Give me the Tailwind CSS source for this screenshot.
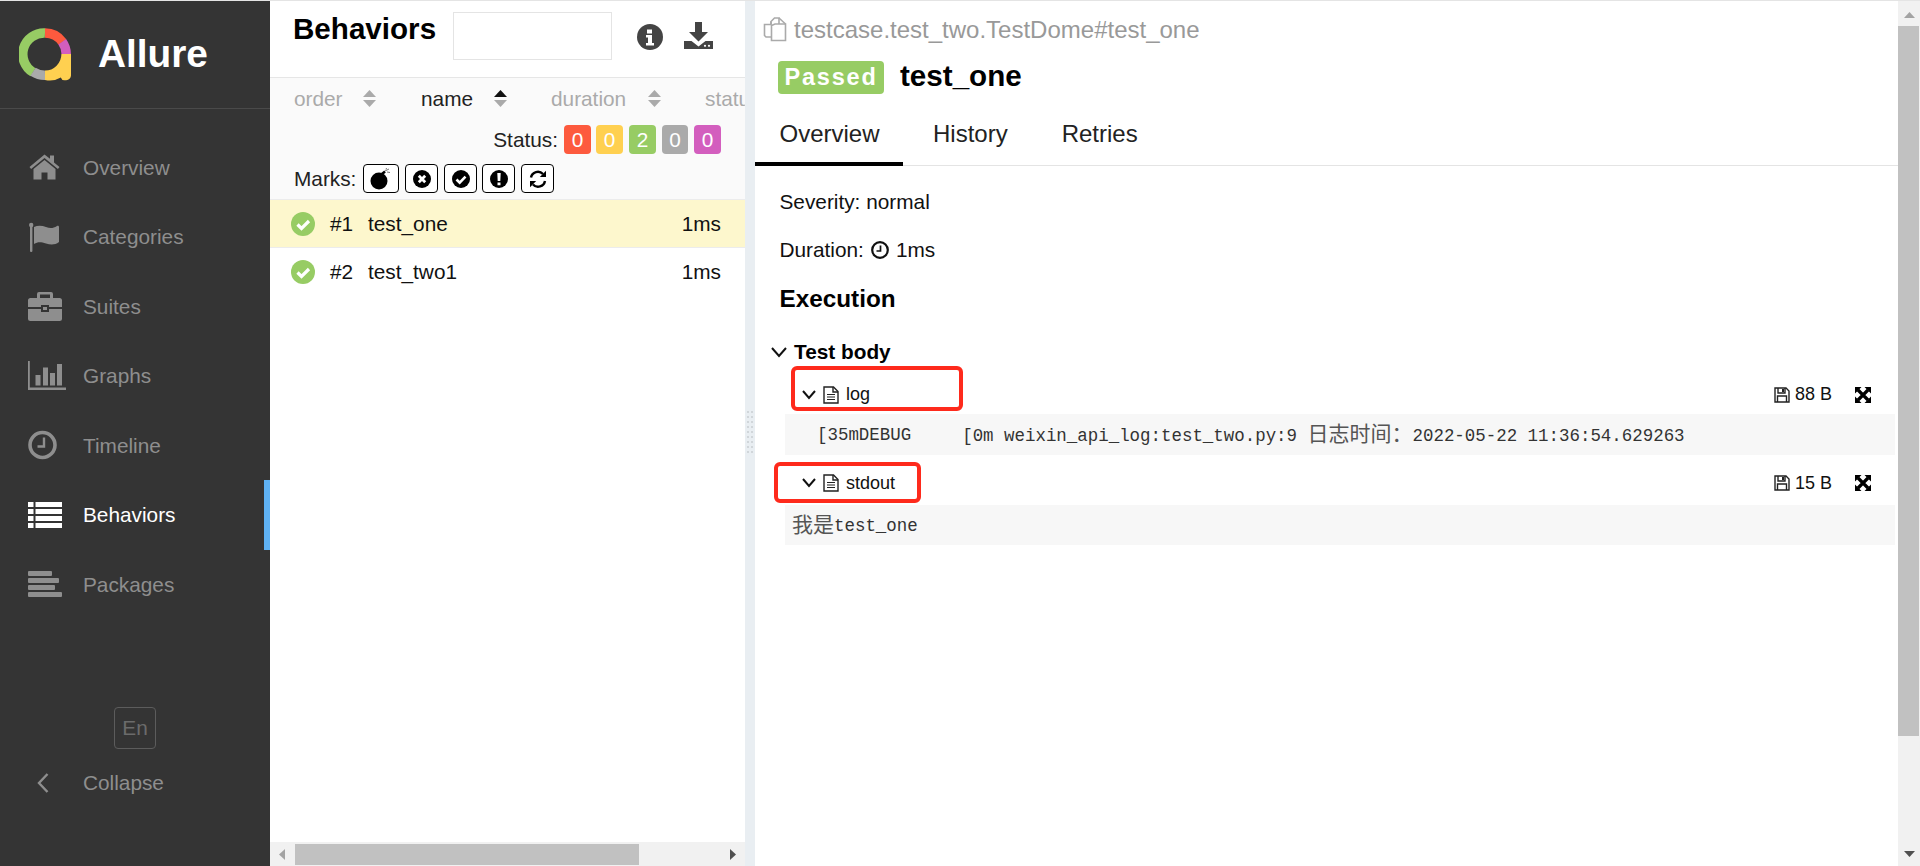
<!DOCTYPE html>
<html>
<head>
<meta charset="utf-8">
<script src="https://cdn.jsdelivr.net/npm/@tailwindcss/browser@4"></script>
</head>
<body class="overflow-hidden">
<div class="relative w-[1920px] h-[866px] flex flex-col overflow-hidden bg-white text-[20.8px] text-[#111] [font-family:'Liberation_Sans','Noto_Sans_CJK_SC',sans-serif]">
  <div class="h-px bg-[#e4e4e4] shrink-0"></div>
  <div class="flex flex-1 min-h-0">
    <!-- Sidebar -->
    <aside class="w-[270px] shrink-0 bg-[#343434] flex flex-col text-[#8e8e8e]">
      <div class="h-[108px] shrink-0 border-b border-[#4a4a4a] flex items-center pl-[19px]">
        <svg class="w-[53px] h-[53px] shrink-0" viewBox="0 0 53 53">
          <g fill="none" stroke-width="9.5">
            <path d="M14 44.300A21.200 21.200 0 0 1 26 5" stroke="#97cc64" />
            <path d="M26 47.200A21.200 21.200 0 0 1 14 43.700" stroke="#aaaaaa"/>
            <path d="M26 5A21.200 21.200 0 0 1 43.400 14" stroke="#fd5a3e"/>
            <path d="M43.200 13.800A21.200 21.200 0 0 1 47.200 26" stroke="#d35ebe"/>
          </g>
          <path d="M26 42.500A16.500 16.500 0 0 0 42.400 26H52V47.500A4.800 4.800 0 0 1 47.200 52.200H45.500A3.800 3.800 0 0 1 41.800 49.500A21.500 21.500 0 0 1 26 52Z" fill="#ffd050"/>
        </svg>
        <span class="ml-[26px] text-[38.8px] font-bold text-white leading-none">Allure</span>
      </div>
      <nav class="pt-[23.500px] flex flex-col">
        <a class="h-[69.5px] flex items-center pl-[28px] gap-[21px]">
          <span class="w-[34px] h-[30px] flex items-center"><svg class="ml-px" width="32" height="26" viewBox="0 0 32 26" fill="#8e8e8e"><path d="M15.500 0.500 0.500 13l1.600 2L15.500 4l13.400 11 1.600-2-5.500-4.600V1.500h-4v3.300Z"/><path d="M15.500 6 4.500 15v10.500h8v-7h6v7h8V15Z"/></svg></span>
          <span>Overview</span>
        </a>
        <a class="h-[69.5px] flex items-center pl-[28px] gap-[21px]">
          <span class="w-[34px] h-[30px] flex items-center"><svg width="34" height="30" viewBox="0 0 34 30" fill="#8e8e8e"><rect x="2" y="3" width="2.400" height="27" rx="1"/><circle cx="3.200" cy="3" r="2.200"/><path d="M6 5c4-2 8-1.500 12 0s7 1.500 11-1c1-.5 2 0 2 1v15c-4 3-8 3-13 1.500S10 19.500 6 22Z"/></svg></span>
          <span>Categories</span>
        </a>
        <a class="h-[69.5px] flex items-center pl-[28px] gap-[21px]">
          <span class="w-[34px] h-[30px] flex items-center"><svg width="34" height="29" viewBox="0 0 34 29" fill="#8e8e8e"><path d="M11 0h12a2 2 0 0 1 2 2v4h6.500A2.500 2.500 0 0 1 34 8.500V15H21v-2h-8v2H0V8.500A2.500 2.500 0 0 1 2.500 6H9V2a2 2 0 0 1 2-2Zm1 2.500V6h10V2.500Z"/><path d="M0 17h13v3h8v-3h13v9.500a2.500 2.500 0 0 1-2.500 2.500h-29A2.500 2.500 0 0 1 0 26.500Z"/><rect x="15" y="15" width="4" height="3"/></svg></span>
          <span>Suites</span>
        </a>
        <a class="h-[69.5px] flex items-center pl-[28px] gap-[21px]">
          <span class="w-[34px] h-[30px] flex items-center overflow-visible"><svg class="overflow-visible" width="38" height="29" viewBox="0 0 38 29" fill="#8e8e8e"><path d="M0 0h1.800v26.500H38V29H0Z"/><rect x="7.500" y="14" width="5" height="10.500"/><rect x="15" y="6.500" width="5" height="18"/><rect x="22" y="12" width="5" height="12.500"/><rect x="29" y="3" width="5" height="21.500"/></svg></span>
          <span>Graphs</span>
        </a>
        <a class="h-[69.5px] flex items-center pl-[28px] gap-[21px]">
          <span class="w-[34px] h-[30px] flex items-center"><svg width="30" height="30" viewBox="0 0 30 30" fill="none" stroke="#8e8e8e"><circle cx="14.500" cy="15" r="12.500" stroke-width="3.600"/><path d="M16 7.500V16.500H9.500" stroke-width="2.400"/></svg></span>
          <span>Timeline</span>
        </a>
        <a class="relative h-[69.5px] flex items-center pl-[28px] gap-[21px] text-white">
          <span class="w-[34px] h-[30px] flex items-center"><svg width="34" height="26" viewBox="0 0 34 26" fill="#fff"><rect y="0" width="5.500" height="5"/><rect x="7.500" y="0" width="26.500" height="5"/><rect y="7" width="5.500" height="5"/><rect x="7.500" y="7" width="26.500" height="5"/><rect y="14" width="5.500" height="5"/><rect x="7.500" y="14" width="26.500" height="5"/><rect y="21" width="5.500" height="5"/><rect x="7.500" y="21" width="26.500" height="5"/></svg></span>
          <span>Behaviors</span>
          <span class="absolute right-0 top-0 w-[6px] h-[70px] bg-[#5fb2f4]"></span>
        </a>
        <a class="h-[69.5px] flex items-center pl-[28px] gap-[21px]">
          <span class="w-[34px] h-[30px] flex items-center"><svg width="34" height="26" viewBox="0 0 34 26" fill="#8e8e8e"><rect y="0" width="24" height="5" rx="1"/><rect y="7" width="31" height="5" rx="1"/><rect y="14" width="27" height="5" rx="1"/><rect y="21" width="34" height="5" rx="1"/></svg></span>
          <span>Packages</span>
        </a>
      </nav>
      <div class="flex-1"></div>
      <div class="flex justify-center">
        <span class="w-[42px] h-[42px] border border-[#5c5c5c] rounded-[4px] flex items-center justify-center text-[#6b6b6b]">En</span>
      </div>
      <div class="h-[68px] mb-[49px] flex items-center pl-[37px]">
        <svg width="12" height="20" viewBox="0 0 12 20" fill="none" stroke="#8e8e8e" stroke-width="2.400"><path d="M10.500 1 2 10l8.500 9"/></svg>
        <span class="ml-[34px]">Collapse</span>
      </div>
    </aside>

    <!-- List pane -->
    <section class="w-[475px] shrink-0 flex flex-col">
      <div class="h-[77px] shrink-0 border-b border-[#e6e6e6] flex items-start">
        <h2 class="ml-[23px] mt-[9px] text-[29.6px] leading-[38px] font-bold text-black">Behaviors</h2>
        <div class="ml-[17px] mt-[11px] w-[159px] h-[48px] border border-[#e4e4e4]"></div>
        <svg class="ml-[25px] mt-[23px]" width="26" height="26" viewBox="0 0 26 26"><circle cx="13" cy="13" r="13" fill="#444"/><path d="M10 5.500h5v4h-5ZM9 11h6v8h2v2.500H9V19h2v-5.500H9Z" fill="#fff"/></svg>
        <svg class="ml-[21px] mt-[21px]" width="29" height="27" viewBox="0 0 29 27" fill="#444"><path d="M11 0h7v10h6L14.500 19.500 5 10h6Z"/><path d="M0 19h7.500l7 5.500 7-5.500H29v8H0Z"/><circle cx="21" cy="23.800" r="1.100" fill="#fff"/><circle cx="25" cy="23.800" r="1.100" fill="#fff"/></svg>
      </div>
      <div class="h-[122px] shrink-0 bg-[#fafafa] border-b border-[#ececec] overflow-hidden">
        <div class="h-[41px] flex items-center whitespace-nowrap text-[#aaa]">
          <span class="shrink-0 ml-[24px] w-[69px]">order</span>
          <svg class="shrink-0" width="13" height="17" viewBox="0 0 13 17" fill="#aaa"><path d="M6.500 0 13 7H0Z"/><path d="M0 10h13L6.500 17Z"/></svg>
          <span class="shrink-0 ml-[45px] w-[73px] text-[#222]">name</span>
          <svg class="shrink-0" width="13" height="17" viewBox="0 0 13 17" fill="#aaa"><path d="M6.500 0 13 7H0Z" fill="#111"/><path d="M0 10h13L6.500 17Z"/></svg>
          <span class="shrink-0 ml-[44px] w-[97px]">duration</span>
          <svg class="shrink-0" width="13" height="17" viewBox="0 0 13 17" fill="#aaa"><path d="M6.500 0 13 7H0Z"/><path d="M0 10h13L6.500 17Z"/></svg>
          <span class="shrink-0 ml-[44px]">status</span>
        </div>
        <div class="h-[41px] flex items-center justify-end pr-[24px] gap-[6px] text-[#222]">
          <span>Status:</span>
          <span class="-mr-px w-[27px] h-[29px] rounded-[4px] bg-[#fd5a3e] text-white flex items-center justify-center">0</span>
          <span class="w-[27px] h-[29px] rounded-[4px] bg-[#ffd050] text-white flex items-center justify-center">0</span>
          <span class="w-[27px] h-[29px] rounded-[4px] bg-[#97cc64] text-white flex items-center justify-center">2</span>
          <span class="w-[26px] h-[29px] rounded-[4px] bg-[#aaaaaa] text-white flex items-center justify-center">0</span>
          <span class="w-[27px] h-[29px] rounded-[4px] bg-[#d35ebe] text-white flex items-center justify-center">0</span>
        </div>
        <div class="h-[37px] flex items-center pl-[24px] text-[#222]">
          <span>Marks:</span>
          <span class="ml-[7px] w-[36px] h-[29px] border border-black rounded-[4px] bg-white flex items-center justify-center"><svg width="22" height="22" viewBox="0 0 22 22"><circle cx="9" cy="13" r="8.500"/><path d="M12 6l3-2.500" stroke="#000" stroke-width="2.500"/><path d="M15 3 19 1M17 4l3 .5M16 1.500l.5-1.500" stroke="#777" stroke-width="1" fill="none"/></svg></span>
          <span class="ml-[6px] w-[33px] h-[29px] border border-black rounded-[4px] bg-white flex items-center justify-center"><svg width="18" height="18" viewBox="0 0 18 18"><circle cx="9" cy="9" r="9"/><path d="M5.800 5.800l6.400 6.400m0-6.400-6.400 6.400" stroke="#fff" stroke-width="2.800"/></svg></span>
          <span class="ml-[6px] w-[33px] h-[29px] border border-black rounded-[4px] bg-white flex items-center justify-center"><svg width="18" height="18" viewBox="0 0 18 18"><circle cx="9" cy="9" r="9"/><path d="M4.500 9.500l3.200 3.200 5.800-6" stroke="#fff" stroke-width="2.600" fill="none"/></svg></span>
          <span class="ml-[5px] w-[33px] h-[29px] border border-black rounded-[4px] bg-white flex items-center justify-center"><svg width="18" height="18" viewBox="0 0 18 18"><circle cx="9" cy="9" r="9"/><path d="M7.300 3h3.400l-.4 8H7.700ZM7.500 12.500h3v2.800h-3Z" fill="#fff"/></svg></span>
          <span class="ml-[6px] w-[33px] h-[29px] border border-black rounded-[4px] bg-white flex items-center justify-center"><svg width="18" height="18" viewBox="0 0 18 18" fill="none" stroke="#000" stroke-width="2.400"><path d="M2 7.500A7 7 0 0 1 14 4"/><path d="M16 11a7 7 0 0 1-12 3.500"/><path d="M17 .8V7h-6.200Z" fill="#000" stroke="none"/><path d="M1 17.200V11h6.200Z" fill="#000" stroke="none"/></svg></span>
        </div>
      </div>
      <div class="h-[48px] shrink-0 bg-[#fdf7cd] border-b border-[#ececec] flex items-center pl-[21px] pr-[24px]">
        <svg width="24" height="24" viewBox="0 0 24 24"><circle cx="12" cy="12" r="12" fill="#97cc64"/><path d="M6.500 12.500l4 4 7.500-7.500" stroke="#fff" stroke-width="3.200" fill="none"/></svg>
        <span class="ml-[15px] w-[38px]">#1</span>
        <span>test_one</span>
        <span class="ml-auto">1ms</span>
      </div>
      <div class="h-[48px] shrink-0 flex items-center pl-[21px] pr-[24px]">
        <svg width="24" height="24" viewBox="0 0 24 24"><circle cx="12" cy="12" r="12" fill="#97cc64"/><path d="M6.500 12.500l4 4 7.500-7.500" stroke="#fff" stroke-width="3.200" fill="none"/></svg>
        <span class="ml-[15px] w-[38px]">#2</span>
        <span>test_two1</span>
        <span class="ml-auto">1ms</span>
      </div>
      <div class="flex-1"></div>
      <div class="h-[24px] shrink-0 bg-[#f1f1f1] flex items-center">
        <svg class="ml-[9px]" width="6" height="11" viewBox="0 0 6 11" fill="#a3a3a3"><path d="M6 0v11L0 5.500Z"/></svg>
        <span class="ml-[10px] w-[344px] h-[21px] mt-[1px] bg-[#c1c1c1]"></span>
        <svg class="ml-auto mr-[9px]" width="6" height="11" viewBox="0 0 6 11" fill="#505050"><path d="M0 0v11l6-5.500Z"/></svg>
      </div>
    </section>

    <!-- Splitter -->
    <div class="w-[10px] shrink-0 bg-[#e9eef2] flex items-center justify-center pb-[2px]">
      <svg width="6" height="46" viewBox="0 0 6 46" fill="#c8ced2"><circle cx="1" cy="2" r="1"/><circle cx="5" cy="2" r="1"/><circle cx="1" cy="7" r="1"/><circle cx="5" cy="7" r="1"/><circle cx="1" cy="12" r="1"/><circle cx="5" cy="12" r="1"/><circle cx="1" cy="17" r="1"/><circle cx="5" cy="17" r="1"/><circle cx="1" cy="22" r="1"/><circle cx="5" cy="22" r="1"/><circle cx="1" cy="27" r="1"/><circle cx="5" cy="27" r="1"/><circle cx="1" cy="32" r="1"/><circle cx="5" cy="32" r="1"/><circle cx="1" cy="37" r="1"/><circle cx="5" cy="37" r="1"/><circle cx="1" cy="42" r="1"/><circle cx="5" cy="42" r="1"/></svg>
    </div>

    <!-- Detail pane -->
    <main class="flex-1 min-w-0 flex flex-col">
      <div class="h-[47px] shrink-0 flex items-center pl-[8px] pt-[10px] text-[#999]">
        <svg width="24" height="25" viewBox="0 0 24 25" fill="none" stroke="#aaa" stroke-width="1.600"><path d="M8 7.500V4.500L11.500 1H16V7"/><path d="M8 4.500V7.500H1.500V18.500L3 20H8"/><path d="M8.500 8.500 12 7H22.500V23.500H8.500Z"/><path d="M16 1 22.500 7"/></svg>
        <span class="ml-[7px] text-[24px] leading-none">testcase.test_two.TestDome#test_one</span>
      </div>
      <div class="h-[47px] shrink-0 flex items-center pl-[23px] pt-[12px]">
        <span class="w-[106px] h-[33px] rounded-[4px] bg-[#97cc64] text-white font-bold text-[23.5px] tracking-[1.800px] flex items-center justify-center">Passed</span>
        <span class="ml-[16px] -mt-[3px] text-[29.6px] font-bold text-black leading-none">test_one</span>
      </div>
      <div class="h-[71px] shrink-0 border-b border-[#e4e4e4] flex text-[24px] text-[#222]">
        <span class="w-[148px] h-[71px] border-b-[4px] border-black flex items-center pl-[24.500px] pt-[11px]">Overview</span>
        <span class="ml-[30px] h-[70px] flex items-center pt-[8px]">History</span>
        <span class="ml-[54px] h-[70px] flex items-center pt-[8px]">Retries</span>
      </div>
      <div class="pl-[24.500px] pt-[24px] leading-[24px]">Severity: normal</div>
      <div class="pl-[24.500px] pt-[24px] leading-[24px] flex items-center">Duration:<svg class="ml-[7px]" width="18" height="18" viewBox="0 0 18 18" fill="none" stroke="#111"><circle cx="9" cy="9" r="7.800" stroke-width="2.200"/><path d="M9.500 4.500V10H5.500" stroke-width="1.700"/></svg><span class="ml-[7px]">1ms</span></div>
      <div class="pl-[24.500px] pt-[23px] text-[24.3px] leading-[28px] font-bold text-black">Execution</div>
      <div class="pl-[16px] pt-[24px] h-[54px] flex items-center font-bold text-[20.8px] text-black">
        <svg width="16" height="11" viewBox="0 0 16 11" fill="none" stroke="#111" stroke-width="2"><path d="M1 1l7 8 7-8"/></svg>
        <span class="ml-[7px]">Test body</span>
      </div>
      <!-- log -->
      <div class="h-[37px] mt-[10px] pb-[2px] shrink-0 flex items-center pl-[47px] text-[18px]">
        <svg width="14" height="10" viewBox="0 0 14 10" fill="none" stroke="#111" stroke-width="2"><path d="M1 1l6 7 6-7"/></svg>
        <svg class="ml-[7px]" width="16" height="18" viewBox="0 0 16 18" fill="none" stroke="#222" stroke-width="1.400"><path d="M1 1h9.500L15 5.500V17H1Z"/><path d="M10 1v5h5"/><path d="M4 8.500h8M4 11h8M4 13.500h8" stroke-width="1.100"/></svg>
        <span class="ml-[7px]">log</span>
        <svg class="ml-auto" width="16" height="16" viewBox="0 0 16 16" fill="none" stroke="#222" stroke-width="1.400"><path d="M1 1h11l3 3v11H1Z"/><path d="M4 1v5h7V1M3.500 15V9h9v6"/><rect x="8" y="2" width="2" height="3" fill="#222" stroke="none"/></svg>
        <span class="ml-[5px] w-[38px]">88 B</span>
        <svg class="ml-[22px] mr-[27px]" width="16" height="16" viewBox="0 0 16 16"><path d="M3 3l10 10M13 3 3 13" stroke="#000" stroke-width="3.200"/><path d="M0 0h6.500L0 6.500ZM16 0v6.500L9.500 0ZM0 16v-6.500L6.500 16ZM16 16H9.500L16 9.500Z"/></svg>
      </div>
      <div class="h-[41px] shrink-0 ml-[30px] mr-[3px] bg-[#f7f7f7] flex items-center pl-[7px] pt-[2px] whitespace-pre text-[#333] [font-family:'Liberation_Mono','Noto_Sans_CJK_SC',monospace] text-[17.45px]"><span class="ml-[25px]">[35mDEBUG</span><span class="ml-[51px]">[0m weixin_api_log:test_two.py:9 <span class="text-[21px] text-[#555]">日志时间：</span>2022-05-22 11:36:54.629263</span></div>
      <!-- stdout -->
      <div class="h-[50px] shrink-0 flex items-center pl-[47px] pt-[6px] text-[18px]">
        <svg width="14" height="10" viewBox="0 0 14 10" fill="none" stroke="#111" stroke-width="2"><path d="M1 1l6 7 6-7"/></svg>
        <svg class="ml-[7px]" width="16" height="18" viewBox="0 0 16 18" fill="none" stroke="#222" stroke-width="1.400"><path d="M1 1h9.500L15 5.500V17H1Z"/><path d="M10 1v5h5"/><path d="M4 8.500h8M4 11h8M4 13.500h8" stroke-width="1.100"/></svg>
        <span class="ml-[7px]">stdout</span>
        <svg class="ml-auto" width="16" height="16" viewBox="0 0 16 16" fill="none" stroke="#222" stroke-width="1.400"><path d="M1 1h11l3 3v11H1Z"/><path d="M4 1v5h7V1M3.500 15V9h9v6"/><rect x="8" y="2" width="2" height="3" fill="#222" stroke="none"/></svg>
        <span class="ml-[5px] w-[38px]">15 B</span>
        <svg class="ml-[22px] mr-[27px]" width="16" height="16" viewBox="0 0 16 16"><path d="M3 3l10 10M13 3 3 13" stroke="#000" stroke-width="3.200"/><path d="M0 0h6.500L0 6.500ZM16 0v6.500L9.500 0ZM0 16v-6.500L6.500 16ZM16 16H9.500L16 9.500Z"/></svg>
      </div>
      <div class="h-[40px] shrink-0 ml-[30px] mr-[3px] bg-[#f7f7f7] flex items-center pl-[7px] pt-[3px] whitespace-pre text-[#333] [font-family:'Liberation_Mono','Noto_Sans_CJK_SC',monospace] text-[17.45px]"><span class="text-[21px] text-[#555]">我是</span>test_one</div>
    </main>

    <!-- Page scrollbar -->
    <div class="w-[22px] shrink-0 bg-[#f1f1f1] flex flex-col items-center">
      <svg class="mt-[11px]" width="11" height="6" viewBox="0 0 11 6" fill="#a3a3a3"><path d="M5.500 0 11 6H0Z"/></svg>
      <span class="mt-[8px] w-[21px] h-[710px] bg-[#c1c1c1] -ml-[1px]"></span>
      <div class="flex-1"></div>
      <svg class="mb-[9px]" width="11" height="6" viewBox="0 0 11 6" fill="#505050"><path d="M0 0h11L5.500 6Z"/></svg>
    </div>
  </div>

  <!-- Annotations drawn over the screenshot -->
  <span class="absolute left-[791px] top-[366px] w-[172px] h-[45px] border-[4px] border-[#fe2a1c] rounded-[6px]"></span>
  <span class="absolute left-[774px] top-[462px] w-[147px] h-[41px] border-[4px] border-[#fe2a1c] rounded-[6px]"></span>
</div>
</body>
</html>
